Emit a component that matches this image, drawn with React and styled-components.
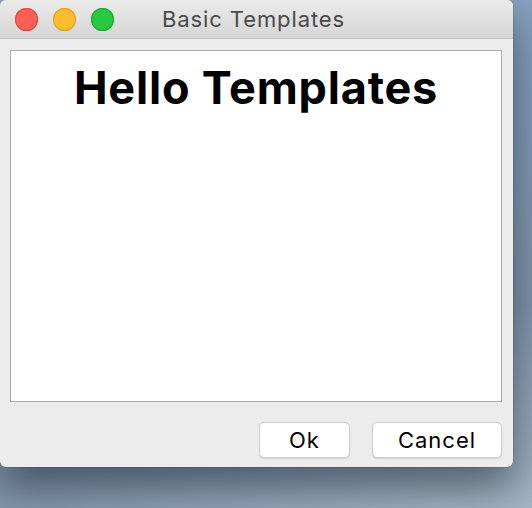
import React from "react";
import styled, { createGlobalStyle } from "styled-components";

const Global = createGlobalStyle`
  html, body { margin: 0; padding: 0; }
  body { width: 532px; height: 508px; overflow: hidden; }
`;

const Desktop = styled.div`
  width: 532px;
  height: 508px;
  background: linear-gradient(160deg, #8fa9c6 0%, #829dbb 40%, #7f94aa 70%, #a6b6c6 100%);
  overflow: hidden;
`;

const Window = styled.div`
  width: 513px;
  height: 467px;
  display: flex;
  flex-direction: column;
  background: #ececec;
  border-radius: 6px;
  overflow: hidden;
  box-shadow: 0 20px 40px rgba(35, 45, 55, 0.6), 0 0 0 0.5px rgba(0,0,0,0.2);
`;

const TitleBar = styled.div`
  height: 38px;
  flex: none;
  display: flex;
  align-items: center;
  position: relative;
  background: linear-gradient(#ebebeb, #d5d5d5);
  border-bottom: 1px solid #c4c4c4;
`;

const Lights = styled.div`
  display: flex;
  gap: 15px;
  padding-left: 15px;
`;

const Light = styled.span`
  width: 23px;
  height: 23px;
  border-radius: 50%;
  background: ${p => p.$c};
  box-shadow: inset 0 0 0 1px ${p => p.$b};
`;

const Title = styled.div`
  position: absolute;
  left: 0;
  right: 0;
  padding-right: 6px;
  text-align: center;
  font-family: Inter, "Liberation Sans", sans-serif;
  font-size: 22px;
  letter-spacing: 0.9px;
  color: #4a4a4a;
  pointer-events: none;
`;

const Body = styled.div`
  flex: 1;
  display: flex;
  flex-direction: column;
  padding: 11px 11px 9px 10px;
`;

const Panel = styled.div`
  height: 350px;
  background: #fff;
  border: 1px solid #a8a8a8;
  display: flex;
  flex-direction: column;
  align-items: center;
`;

const Heading = styled.h1`
  margin: 9px 0 0;
  font-family: Inter, "Liberation Sans", sans-serif;
  font-weight: 700;
  font-size: 45px;
  letter-spacing: 0.8px;
  color: #000;
`;

const Buttons = styled.div`
  display: flex;
  justify-content: flex-end;
  gap: 22px;
  margin-top: 20px;
`;

const Button = styled.button`
  width: ${p => p.$w}px;
  height: 36px;
  background: #fff;
  border: 1px solid #cfcfcf;
  border-radius: 5px;
  box-shadow: 0 1px 1px rgba(0,0,0,0.12);
  font-family: Inter, "Liberation Sans", sans-serif;
  font-size: 22px;
  letter-spacing: 1px;
  color: #000;
  padding: 0;
`;

export default function App() {
  return (
    <Desktop>
      <Global />
      <Window>
        <TitleBar>
          <Lights>
            <Light $c="#fe5f57" $b="#e2463f" />
            <Light $c="#febc2e" $b="#e1a116" />
            <Light $c="#28c840" $b="#1aab29" />
          </Lights>
          <Title>Basic Templates</Title>
        </TitleBar>
        <Body>
          <Panel>
            <Heading>Hello Templates</Heading>
          </Panel>
          <Buttons>
            <Button $w={91}>Ok</Button>
            <Button $w={130}>Cancel</Button>
          </Buttons>
        </Body>
      </Window>
    </Desktop>
  );
}
